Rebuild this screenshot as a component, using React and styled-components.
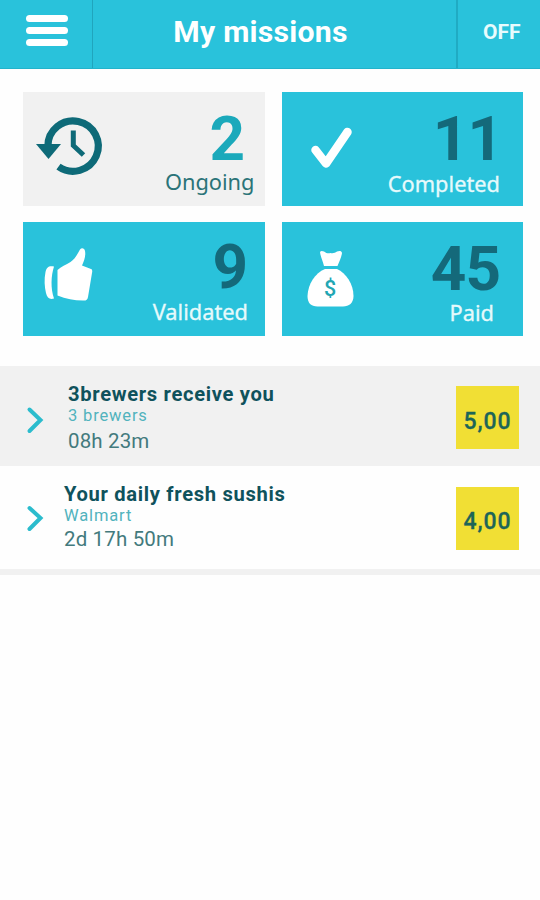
import styled, { createGlobalStyle } from "styled-components";

const GlobalStyle = createGlobalStyle`
body {
margin: 0;
background: #fefefe;
font-family: Roboto, sans-serif;
}
`;

const Page = styled.div`
display: flex;
flex-direction: column;
width: 540px;
height: 900px;
overflow: hidden;
background: #fefefe;
`;

const Header = styled.header`
display: flex;
box-sizing: border-box;
height: 69px;
background: #29c2db;
border-bottom: 1px solid #22b3cb;
color: #fff;
`;

const MenuButton = styled.div`
box-sizing: border-box;
width: 93px;
padding: 15px 0 0 26px;
border-right: 1px solid #20a5bd;
display: flex;
flex-direction: column;
gap: 5px;
`;

const MenuBar = styled.span`
width: 42px;
height: 7px;
border-radius: 3.5px;
background: #fff;
`;

const Title = styled.h1`
flex: 1;
margin: 0;
padding-right: 28px;
text-align: center;
font-size: 30.2px;
font-weight: 700;
line-height: 63px;
letter-spacing: 0.25px;
`;

const OffButton = styled.div`
box-sizing: border-box;
width: 84px;
padding-left: 25px;
border-left: 2px solid #20abc3;
font-size: 21px;
font-weight: 700;
line-height: 64px;
color: #e8fbfd;
`;

const Tiles = styled.section`
display: grid;
grid-template-columns: 242px 241px;
grid-auto-rows: 114px;
column-gap: 17px;
row-gap: 16px;
padding: 23px 0 0 23px;
`;

const Tile = styled.div`
display: flex;
justify-content: space-between;
background: ${props => props.$active ? '#f1f1f1' : '#29c2db'};
`;

const TileIcon = styled.svg`
width: 90px;
height: 114px;
fill: ${props => props.$active ? '#0e6a78' : '#fff'};
`;

const TileText = styled.div`
display: flex;
flex-direction: column;
align-items: flex-end;
`;

const Count = styled.div`
padding-top: ${props => props.$top}px;
padding-right: ${props => props.$right}px;
font-size: 62px;
font-weight: 700;
line-height: 46px;
letter-spacing: -1px;
color: ${props => props.$active ? '#1ba9bb' : '#14697a'};
`;

const Label = styled.div`
padding-top: ${props => props.$top}px;
padding-right: ${props => props.$right}px;
font-family: "Noto Sans", sans-serif;
font-size: 21.8px;
line-height: 24px;
color: ${props => props.$active ? '#2b7478' : '#e6fafc'};
-webkit-text-stroke: ${props => props.$active ? '0' : '0.3px #e6fafc'};
`;

const List = styled.section`
margin-top: 30px;
border-bottom: 6px solid #f1f1f1;
`;

const Row = styled.div`
display: flex;
box-sizing: border-box;
height: ${props => props.$shaded ? 100 : 103}px;
background: ${props => props.$shaded ? '#f1f1f1' : '#fefefe'};
`;

const Arrow = styled.svg`
width: 30px;
height: 100px;
padding-left: 20px;
fill: none;
stroke: #2bbccd;
stroke-width: 4;
stroke-linecap: round;
`;

const Mission = styled.div`
flex: 1;
padding: ${props => props.$shaded ? '16px 0 0 18px' : '16px 0 0 14px'};
`;

const MissionName = styled.div`
font-size: 20.2px;
font-weight: 700;
line-height: 24px;
letter-spacing: 0.67px;
color: #0f525c;
`;

const Brand = styled.div`
font-size: 16.5px;
line-height: 20px;
letter-spacing: 0.85px;
color: #51b3bd;
`;

const TimeLeft = styled.div`
padding-top: ${props => props.$shaded ? 2 : 0}px;
font-size: 20.5px;
line-height: 26px;
letter-spacing: 0.15px;
color: #437a7d;
`;

const Price = styled.div`
width: 63px;
height: 63px;
margin: ${props => props.$shaded ? 20 : 21}px 21px 0 0;
background: #f1df34;
color: #1d6558;
font-size: 23px;
font-weight: 500;
letter-spacing: 0.9px;
line-height: ${props => props.$shaded ? 72 : 69}px;
text-align: center;
-webkit-text-stroke: 0.3px #1d6558;
`;

const ClockIcon = () => {
	return <TileIcon viewBox="0 0 90 114" $active>
		<path d="M24.900 54A25.200 25.200 0 1 1 35.500 74.600" fill="none" stroke="#0e6a78" strokeWidth="7.2" />
		<path d="M13 52H38L25.500 67Z" />
		<path d="M50.300 38.500V53.500L60.500 63" fill="none" stroke="#0e6a78" strokeWidth="5" />
	</TileIcon>
}

const CheckIcon = () => {
	return <TileIcon viewBox="0 0 90 114">
		<path d="M33.500 58L44 71.500L65.500 40" fill="none" stroke="#fff" strokeWidth="8.5" strokeLinecap="round" strokeLinejoin="round" />
	</TileIcon>
}

const ThumbIcon = () => {
	return <TileIcon viewBox="0 0 90 114">
		<path d="M34.500 48C38 45 43 42.500 47.500 40C52 37 54.500 32 57 27.500C58.500 25.500 61.500 26 62 29C63 34 61 39 59 43.500L68 47C69.300 47.500 69.500 49 69 51L65 75C64.500 78 62.500 79 60 78.500C51 78.500 43 77 34.500 73.500Z" />
		<path d="M31 44.500C26 43.500 23.500 45 22.500 50C21 57 21.500 65 23 71C24 76 27 78 31 76.500C27.500 66 28 54 31 44.500Z" />
	</TileIcon>
}

const MoneyIcon = () => {
	return <TileIcon viewBox="0 0 90 114">
		<path d="M38 30C39 28.500 40.500 29 42 29.500C44.500 31.500 46.500 31.500 48.500 31C51 31.500 53 31 55 29.500C57 29 59.500 28.500 60 31C59.500 35 57.500 39 55.500 44H42C41 39 38.500 35 38 30Z" />
		<path d="M43 47H55C64 51 71.500 62 71.500 74C71.500 81 67 84.500 61 84.500H35.500C29 84.500 25.500 81 25.500 74C26 62 33 51 43 47Z" />
		<text x="48" y="73.500" fontSize="21.5" fontWeight="500" fontFamily="Roboto" textAnchor="middle" fill="#22a6b3">$</text>
	</TileIcon>
}

const tiles = [
	{ count: "2", label: "Ongoing", icon: ClockIcon, active: true, top: 24, countRight: 21, labelTop: 8, labelRight: 10.5 },
	{ count: "11", label: "Completed", icon: CheckIcon, top: 24, countRight: 21, labelTop: 10, labelRight: 23 },
	{ count: "9", label: "Validated", icon: ThumbIcon, top: 22, countRight: 18, labelTop: 10, labelRight: 17 },
	{ count: "45", label: "Paid", icon: MoneyIcon, top: 24, countRight: 23, labelTop: 9, labelRight: 29 },
];

const missions = [
	{ name: "3brewers receive you", brand: "3 brewers", time: "08h 23m", price: "5,00", shaded: true },
	{ name: "Your daily fresh sushis", brand: "Walmart", time: "2d 17h 50m", price: "4,00" },
];

const App = () => {
	return <Page>
		<GlobalStyle />
		<Header>
			<MenuButton>
				<MenuBar />
				<MenuBar />
				<MenuBar />
			</MenuButton>
			<Title>My missions</Title>
			<OffButton>OFF</OffButton>
		</Header>
		<Tiles>
			{tiles.map(({ icon: Icon, ...tile }) => (
				<Tile key={tile.label} $active={tile.active}>
					<Icon />
					<TileText>
						<Count $active={tile.active} $top={tile.top} $right={tile.countRight}>{tile.count}</Count>
						<Label $active={tile.active} $top={tile.labelTop} $right={tile.labelRight}>{tile.label}</Label>
					</TileText>
				</Tile>
			))}
		</Tiles>
		<List>
			{missions.map(mission => (
				<Row key={mission.name} $shaded={mission.shaded}>
					<Arrow viewBox="0 0 30 100">
						<path d={mission.shaded ? "M9.500 43.500L20.500 54L9.500 65" : "M9.500 42L20.500 52L9.500 63"} />
					</Arrow>
					<Mission $shaded={mission.shaded}>
						<MissionName>{mission.name}</MissionName>
						<Brand>{mission.brand}</Brand>
						<TimeLeft $shaded={mission.shaded}>{mission.time}</TimeLeft>
					</Mission>
					<Price $shaded={mission.shaded}>{mission.price}</Price>
				</Row>
			))}
		</List>
	</Page>
}

export default App;
